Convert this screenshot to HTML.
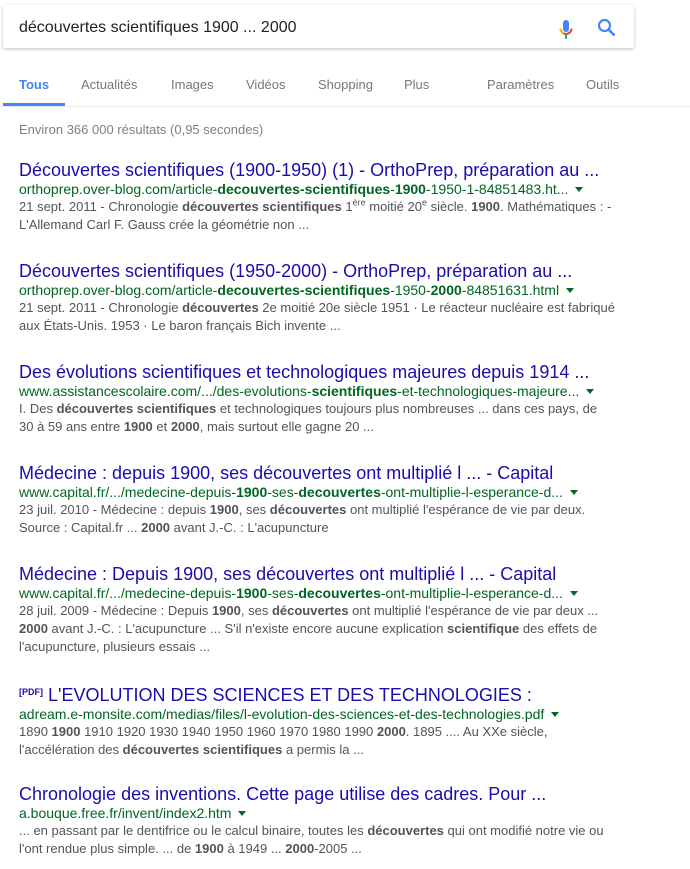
<!DOCTYPE html>
<html><head><meta charset="utf-8"><style>
body{margin:0;width:690px;height:869px;overflow:hidden;background:#fff;font-family:"Liberation Sans",Arial,sans-serif;position:relative}
.box{position:absolute;left:3px;top:5px;width:631px;height:43px;background:#fff;box-shadow:0 1px 3px rgba(0,0,0,.25);border-radius:2px}
.q{position:absolute;left:16px;top:14px;font-size:16px;color:#222}
.tab{position:absolute;top:77px;font-size:13px;color:#777}
.hl{position:absolute;left:0;top:106px;width:690px;height:1px;background:#ebebeb}
.ul{position:absolute;left:3px;top:103px;width:62px;height:3px;background:#4285f4}
.stats{position:absolute;left:19px;top:122px;font-size:13px;color:#808080}
.r{position:absolute;left:19px;width:660px}
.t{font-size:18px;line-height:20px;color:#1a0dab;white-space:nowrap}
.u{font-size:14px;line-height:18px;color:#006621;white-space:nowrap}
.u:after{content:"";display:inline-block;margin-left:7px;border-left:4px solid transparent;border-right:4px solid transparent;border-top:5px solid #006621;vertical-align:2px}
.s{font-size:13px;line-height:18px;color:#545454;white-space:nowrap}
b{color:#545454}
.u b{color:#006621}
sup{font-size:9px;line-height:0}
</style></head><body>
<div class="box"><div class="q">découvertes scientifiques 1900 ... 2000</div>
<svg style="position:absolute;left:556px;top:14px" width="14" height="22" viewBox="0 0 14 22"><rect x="4" y="1" width="6" height="12" rx="3" fill="#4285f4"/><path d="M1.5 9.5a5.5 5.5 0 0 0 11 0" stroke="#ea4335" stroke-width="2" fill="none"/><path d="M7 15v5" stroke="#34a853" stroke-width="2"/><path d="M1.5 9.5a5.5 5.5 0 0 0 3 5" stroke="#fbbc05" stroke-width="2" fill="none"/></svg>
<svg style="position:absolute;left:594px;top:13px" width="20" height="20" viewBox="0 0 20 20"><circle cx="7.5" cy="7.5" r="5.5" stroke="#4285f4" stroke-width="2.2" fill="none"/><path d="M11.5 11.5l6 6" stroke="#4285f4" stroke-width="2.6"/></svg>
</div>
<div class="tab" style="left:19px;color:#4285f4;font-weight:bold">Tous</div>
<div class="tab" style="left:81px">Actualités</div>
<div class="tab" style="left:171px">Images</div>
<div class="tab" style="left:246px">Vidéos</div>
<div class="tab" style="left:318px">Shopping</div>
<div class="tab" style="left:404px">Plus</div>
<div class="tab" style="left:487px">Paramètres</div>
<div class="tab" style="left:586px">Outils</div>
<div class="hl"></div><div class="ul"></div>
<div class="stats">Environ 366 000 résultats (0,95 secondes)</div>

<div class="r" style="top:160px"><div class="t">Découvertes scientifiques (1900-1950) (1) - OrthoPrep, préparation au ...</div>
<div class="u">orthoprep.over-blog.com/article-<b>decouvertes-scientifiques</b>-<b>1900</b>-1950-1-84851483.ht...</div>
<div class="s">21 sept. 2011 - Chronologie <b>découvertes scientifiques</b> 1<sup>ère</sup> moitié 20<sup>e</sup> siècle. <b>1900</b>. Mathématiques : -<br>L'Allemand Carl F. Gauss crée la géométrie non ...</div></div>

<div class="r" style="top:261px"><div class="t">Découvertes scientifiques (1950-2000) - OrthoPrep, préparation au ...</div>
<div class="u">orthoprep.over-blog.com/article-<b>decouvertes-scientifiques</b>-1950-<b>2000</b>-84851631.html</div>
<div class="s">21 sept. 2011 - Chronologie <b>découvertes</b> 2e moitié 20e siècle 1951 · Le réacteur nucléaire est fabriqué<br>aux États-Unis. 1953 · Le baron français Bich invente ...</div></div>

<div class="r" style="top:362px"><div class="t">Des évolutions scientifiques et technologiques majeures depuis 1914 ...</div>
<div class="u">www.assistancescolaire.com/.../des-evolutions-<b>scientifiques</b>-et-technologiques-majeure...</div>
<div class="s">I. Des <b>découvertes scientifiques</b> et technologiques toujours plus nombreuses ... dans ces pays, de<br>30 à 59 ans entre <b>1900</b> et <b>2000</b>, mais surtout elle gagne 20 ...</div></div>

<div class="r" style="top:463px"><div class="t">Médecine : depuis 1900, ses découvertes ont multiplié l ... - Capital</div>
<div class="u">www.capital.fr/.../medecine-depuis-<b>1900</b>-ses-<b>decouvertes</b>-ont-multiplie-l-esperance-d...</div>
<div class="s">23 juil. 2010 - Médecine : depuis <b>1900</b>, ses <b>découvertes</b> ont multiplié l'espérance de vie par deux.<br>Source : Capital.fr ... <b>2000</b> avant J.-C. : L'acupuncture</div></div>

<div class="r" style="top:564px"><div class="t">Médecine : Depuis 1900, ses découvertes ont multiplié l ... - Capital</div>
<div class="u">www.capital.fr/.../medecine-depuis-<b>1900</b>-ses-<b>decouvertes</b>-ont-multiplie-l-esperance-d...</div>
<div class="s">28 juil. 2009 - Médecine : Depuis <b>1900</b>, ses <b>découvertes</b> ont multiplié l'espérance de vie par deux ...<br><b>2000</b> avant J.-C. : L'acupuncture ... S'il n'existe encore aucune explication <b>scientifique</b> des effets de<br>l'acupuncture, plusieurs essais ...</div></div>

<div class="r" style="top:682px"><div class="t"><span style="font-size:9px;font-weight:bold;vertical-align:6px;color:#1a0dab">[PDF]</span> L'EVOLUTION DES SCIENCES ET DES TECHNOLOGIES :</div>
<div class="u">adream.e-monsite.com/medias/files/l-evolution-des-sciences-et-des-technologies.pdf</div>
<div class="s">1890 <b>1900</b> 1910 1920 1930 1940 1950 1960 1970 1980 1990 <b>2000</b>. 1895 .... Au XXe siècle,<br>l'accélération des <b>découvertes scientifiques</b> a permis la ...</div></div>

<div class="r" style="top:784px"><div class="t">Chronologie des inventions. Cette page utilise des cadres. Pour ...</div>
<div class="u">a.bouque.free.fr/invent/index2.htm</div>
<div class="s">... en passant par le dentifrice ou le calcul binaire, toutes les <b>découvertes</b> qui ont modifié notre vie ou<br>l'ont rendue plus simple. ... de <b>1900</b> à 1949 ... <b>2000</b>-2005 ...</div></div>
</body></html>
